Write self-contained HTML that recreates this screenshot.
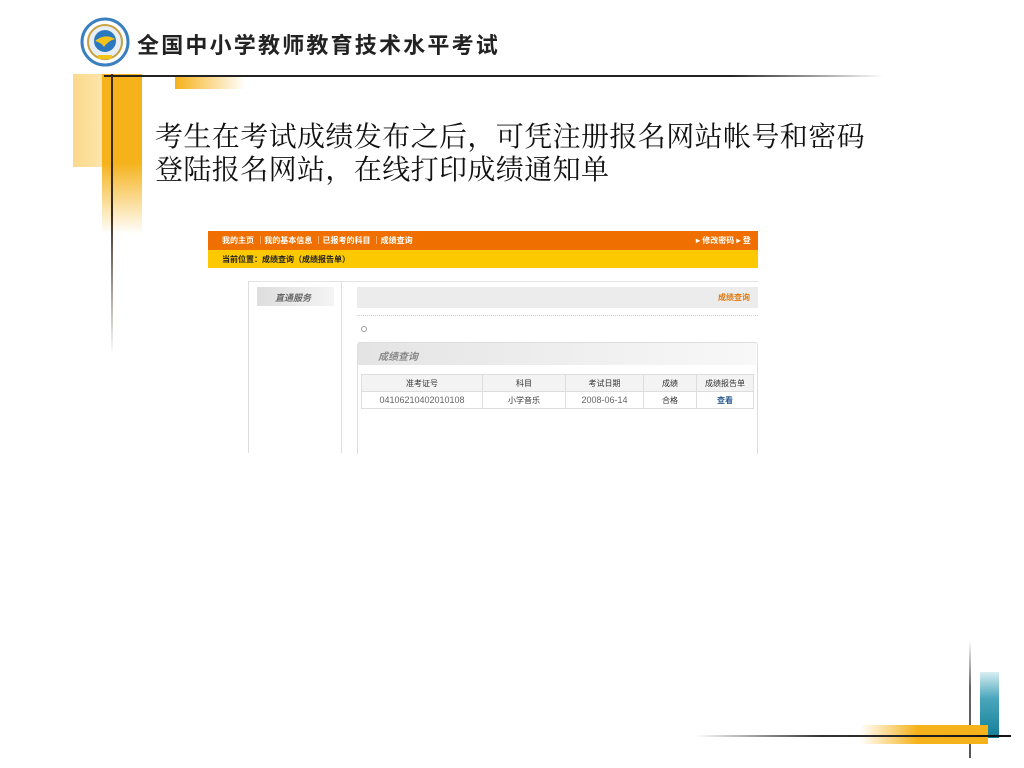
<!DOCTYPE html>
<html><head><meta charset="utf-8"><style>
body{margin:0;width:1024px;height:768px;background:#fff;position:relative;overflow:hidden;font-family:"Liberation Sans","Noto Sans CJK SC",sans-serif}
.a{position:absolute}
.s{font-size:9px;white-space:nowrap}
</style></head><body>
<svg class="a" style="left:80px;top:17px" width="50" height="50" viewBox="0 0 50 50">
<circle cx="25" cy="25" r="23" fill="#fff" stroke="#3a7fc0" stroke-width="3"/>
<circle cx="25" cy="25" r="17" fill="#e8eef5" stroke="#c9a040" stroke-width="2"/>
<circle cx="25" cy="24" r="11" fill="#2a78c0"/>
<path d="M15 24 Q25 16 35 22 Q28 24 24 30 Q22 26 15 24Z" fill="#f3c21b"/>
<rect x="18" y="38" width="14" height="4" fill="#f3c21b"/>
</svg>
<div class="a" style="left:137px;top:29px;font-family:'Noto Sans CJK SC',sans-serif;font-size:22px;line-height:30px;font-weight:bold;color:#222;letter-spacing:2.2px;white-space:nowrap">全国中小学教师教育技术水平考试</div>
<div class="a" style="left:73px;top:74px;width:70px;height:93px;background:linear-gradient(90deg,#fbd98a,#fde9b8 60%,rgba(255,255,255,0))"></div>
<div class="a" style="left:102px;top:74px;width:40px;height:160px;background:linear-gradient(180deg,#f5b21a 0%,#f5b21a 55%,rgba(255,255,255,0) 100%)"></div>
<div class="a" style="left:175px;top:76px;width:70px;height:13px;background:linear-gradient(90deg,#f5b21a,rgba(255,255,255,0))"></div>
<div class="a" style="left:104px;top:75px;width:780px;height:2px;background:linear-gradient(90deg,#222 80%,rgba(255,255,255,0))"></div>
<div class="a" style="left:111px;top:74px;width:2px;height:280px;background:linear-gradient(180deg,#3a2a1a 50%,rgba(255,255,255,0))"></div>
<div class="a" style="left:155px;top:119px;font-family:'Noto Serif CJK SC',serif;font-size:28px;line-height:33px;letter-spacing:0.4px;color:#111;white-space:nowrap">考生在考试成绩发布之后，可凭注册报名网站帐号和密码<br>登陆报名网站，在线打印成绩通知单</div>
<div class="a" style="left:208px;top:231px;width:550px;height:19px;background:#ef7000"></div>
<div class="a s" style="left:222px;top:235px;color:#fff;font-size:8px;font-weight:bold">我的主页 ｜我的基本信息 ｜已报考的科目 ｜成绩查询</div>
<div class="a s" style="left:696px;top:235px;color:#fff;font-size:8px;font-weight:bold">▸ 修改密码 ▸ 登</div>
<div class="a" style="left:208px;top:250px;width:550px;height:18px;background:#fcc800"></div>
<div class="a s" style="left:222px;top:254px;color:#222;font-size:8px;font-weight:bold">当前位置：成绩查询（成绩报告单）</div>
<div class="a" style="left:248px;top:281px;width:510px;height:1px;background:#e4e4e4"></div>
<div class="a" style="left:248px;top:281px;width:1px;height:172px;background:#ddd"></div>
<div class="a" style="left:341px;top:281px;width:1px;height:172px;background:#ddd"></div>
<div class="a" style="left:257px;top:287px;width:77px;height:19px;background:linear-gradient(90deg,#ddd,#f4f4f4)"></div>
<div class="a s" style="left:275px;top:291px;color:#666;font-style:italic;font-weight:bold">直通服务</div>
<div class="a" style="left:357px;top:287px;width:401px;height:21px;background:#ececec"></div>
<div class="a s" style="left:718px;top:292px;color:#e07a10;font-size:8px;font-weight:bold">成绩查询</div>
<div class="a" style="left:357px;top:315px;width:401px;border-top:1px dotted #ccc"></div>
<div class="a" style="left:361px;top:326px;width:4px;height:4px;border:1px solid #999;border-radius:50%"></div>
<div class="a" style="left:357px;top:342px;width:399px;height:111px;border:1px solid #ddd;border-bottom:none;border-radius:3px 3px 0 0"></div>
<div class="a" style="left:358px;top:343px;width:398px;height:22px;background:linear-gradient(90deg,#e4e4e4,#f8f8f8)"></div>
<div class="a s" style="left:378px;top:348px;color:#888;font-size:10px;font-style:italic;font-weight:bold">成绩查询</div>
<table class="a" style="left:361px;top:374px;width:393px;border-collapse:collapse;font-size:8px;color:#333;text-align:center">
<tr style="background:#f3f3f3;height:17px"><td style="border:1px solid #ddd;width:118px">准考证号</td><td style="border:1px solid #ddd;width:80px">科目</td><td style="border:1px solid #ddd;width:75px">考试日期</td><td style="border:1px solid #ddd;width:50px">成绩</td><td style="border:1px solid #ddd">成绩报告单</td></tr>
<tr style="height:17px"><td style="border:1px solid #ddd;color:#666;font-size:9px">04106210402010108</td><td style="border:1px solid #ddd">小学音乐</td><td style="border:1px solid #ddd;color:#666;font-size:9px">2008-06-14</td><td style="border:1px solid #ddd">合格</td><td style="border:1px solid #ddd;color:#2a5a90;font-weight:bold">查看</td></tr>
</table>
<div class="a" style="left:969px;top:640px;width:2px;height:118px;background:linear-gradient(180deg,rgba(255,255,255,0),#666 40%,#555)"></div>
<div class="a" style="left:980px;top:672px;width:19px;height:66px;background:linear-gradient(180deg,#d8eef3,#4aa6bb 40%,#137f97)"></div>
<div class="a" style="left:860px;top:725px;width:128px;height:19px;background:linear-gradient(90deg,rgba(255,255,255,0),#f5b21a 45%)"></div>
<div class="a" style="left:695px;top:735px;width:316px;height:2px;background:linear-gradient(90deg,rgba(255,255,255,0),#333 40%,#111)"></div>
</body></html>
